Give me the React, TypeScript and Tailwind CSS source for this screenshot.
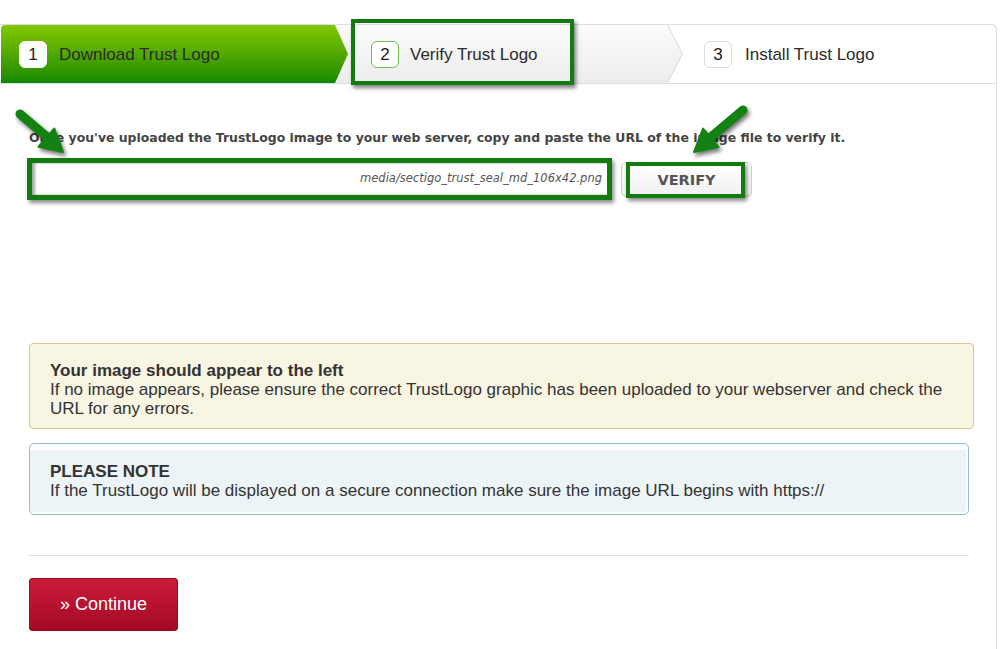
const arial = "font-['Liberation_Sans',Arial,sans-serif]";
const tahoma = "font-['DejaVu_Sans',Tahoma,Verdana,sans-serif]";

function Badge({ n, variant }: { n: number; variant: "done" | "active" | "todo" }) {
  const ring =
    variant === "done"
      ? "border border-white"
      : variant === "active"
        ? "border border-[#6fbf4f]"
        : "border border-[#dcdcdc]";
  return (
    <span
      className={`flex h-[27px] w-[28px] shrink-0 items-center justify-center rounded-[6px] bg-white text-[17px] text-[#222] ${ring}`}
    >
      {n}
    </span>
  );
}

function Arrows() {
  return (
    <svg
      className="pointer-events-none absolute left-0 top-0 z-40 drop-shadow-[2px_3px_2px_rgba(0,0,0,0.55)]"
      width="1000"
      height="649"
      viewBox="0 0 1000 649"
    >
      <g fill="#138213" stroke="#138213">
        <line x1="20" y1="114" x2="47" y2="137" strokeWidth="9" strokeLinecap="round" />
        <polygon points="63,152 38.5,146.7 54.3,128.5" strokeWidth="2" strokeLinejoin="round" />
        <line x1="743" y1="110" x2="711" y2="137" strokeWidth="9" strokeLinecap="round" />
        <polygon points="694,152 718.5,147 703,128.6" strokeWidth="2" strokeLinejoin="round" />
      </g>
    </svg>
  );
}

export default function App() {
  return (
    <div className={`relative h-[649px] w-[1000px] overflow-hidden bg-white ${arial}`}>
      <div className="mt-[24px] h-[625px] w-[997px] rounded-tr-[6px] border-r border-t border-[#dddddd]">
        {/* steps */}
        <div className="flex h-[59px] border-b border-[#dddddd]">
          <div className="relative z-20 ml-[1px] flex w-[347px] items-center rounded-tl-[4px] bg-gradient-to-b from-[#80c800] to-[#088900] pl-[18px] pt-[1px] [clip-path:polygon(0_0,334px_0,100%_50%,334px_100%,0_100%)]">
            <Badge n={1} variant="done" />
            <span className="ml-[12px] text-[17px] text-[#2b2b2b]">Download Trust Logo</span>
          </div>
          <div className="relative z-10 -ml-[13px] w-[348px] bg-[#d9d9d9] [clip-path:polygon(0_0,333px_0,100%_50%,333px_100%,0_100%)]">
            <div className="flex h-full items-center bg-gradient-to-b from-[#fbfbfb] to-[#ececec] pl-[36px] pt-[1px] [clip-path:polygon(0_0,332px_0,347px_50%,332px_100%,0_100%)]">
              <Badge n={2} variant="active" />
              <span className="ml-[11px] text-[17px] text-[#2b2b2b]">Verify Trust Logo</span>
            </div>
          </div>
          <div className="-ml-[15px] flex flex-1 items-center pl-[36px] pt-[1px]">
            <Badge n={3} variant="todo" />
            <span className="ml-[13px] text-[17px] text-[#2b2b2b]">Install Trust Logo</span>
          </div>
        </div>

        {/* content */}
        <div className="pl-[29px] pr-[22px]">
          <p className={`mt-[46px] text-[12.45px] font-bold leading-[16px] text-[#444] ${tahoma}`}>
            Once you've uploaded the TrustLogo image to your web server, copy and paste the URL of the image file to verify it.
          </p>

          <div className="mt-[12px] flex items-start">
            <div className="-ml-[2px] flex h-[42px] w-[585px] items-center justify-end border-[5px] border-[#127c12] bg-white pr-[5px] shadow-[2px_3px_4px_rgba(0,0,0,0.45),inset_3px_0_3px_rgba(0,0,0,0.35)]">
              <span className={`text-[11.5px] italic text-[#555] ${tahoma}`}>media/sectigo_trust_seal_md_106x42.png</span>
            </div>
            <button className="relative ml-[9px] mt-[4px] h-[35px] w-[131px] rounded-[5px] border border-[#cccccc] bg-gradient-to-b from-white to-[#f0f0f0]">
              <span className="absolute left-[4px] top-[-1px] h-[36px] w-[119px] border-[4px] border-[#127c12] shadow-[2px_3px_4px_rgba(0,0,0,0.45)]" />
              <span className={`relative text-[14.5px] font-bold text-[#555] ${tahoma}`}>VERIFY</span>
            </button>
          </div>

          <div className="mt-[143px] rounded-[4px] border border-[#d8c98c] bg-[#f9f5e3] pb-[10px] pl-[20px] pr-[20px] pt-[17px] text-[17px] leading-[19px] text-[#333]">
            <div className="font-bold">Your image should appear to the left</div>
            <div>
              If no image appears, please ensure the correct TrustLogo graphic has been uploaded to your webserver and check the URL for any errors.
            </div>
          </div>

          <div className="mr-[5px] mt-[14px] rounded-[5px] border border-[#8dbde0] bg-white pb-[2px] pr-[2px] pt-[6px]">
            <div className="bg-[#edf4f8] pb-[12px] pl-[20px] pt-[12px] text-[17px] leading-[19px] text-[#333]">
              <div className="font-bold">PLEASE NOTE</div>
              <div>If the TrustLogo will be displayed on a secure connection make sure the image URL begins with https://</div>
            </div>
          </div>

          <div className="mr-[5px] mt-[40px] border-t border-[#e0e0e0]" />

          <button className="mt-[22px] h-[53px] w-[149px] rounded-[3px] border border-[#9c0a22] bg-gradient-to-b from-[#cd1b3b] to-[#a20a24] text-[18px] text-white">
            » Continue
          </button>
        </div>
      </div>

      {/* annotation overlays */}
      <div className="pointer-events-none absolute left-[351px] top-[19px] z-30 h-[66px] w-[223px] border-[4px] border-[#127c12] shadow-[2px_3px_4px_rgba(0,0,0,0.5)]" />
      <Arrows />
    </div>
  );
}
